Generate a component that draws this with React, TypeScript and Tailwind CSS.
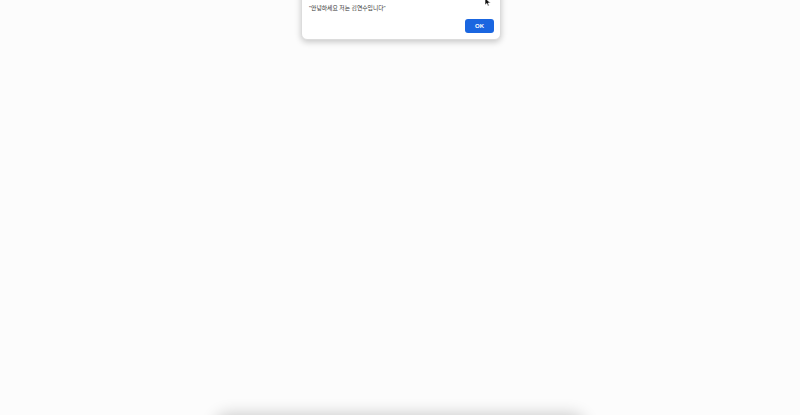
export default function App() {
  return (
    <div className="relative h-[415px] w-[800px] overflow-hidden bg-[#fcfcfc] font-['Liberation_Sans','Noto_Sans_CJK_KR',sans-serif]">
      <div className="absolute left-[301px] top-[-20px] w-[200px] rounded-[6px] bg-white shadow-[0_2px_6px_rgba(0,0,0,0.22)] border border-[#dcdcdc]">
        <div className="px-[7px] pt-[23px] text-[5.8px] leading-[9px] text-[#333]">
          "안녕하세요 저는 김연수입니다"
        </div>
        <div className="flex justify-end pl-[7px] pr-[6px] pb-[6px] pt-[6px]">
          <button className="h-[14px] w-[29px] rounded-[3px] bg-[#1a66e0] text-[6px] font-bold text-white">
            OK
          </button>
        </div>
      </div>
      <svg className="absolute left-[484px] top-[-2px]" width="8" height="10" viewBox="0 0 8 10">
        <path d="M1 0 L1 7 L2.8 5.4 L4 8 L5.2 7.5 L4 5 L6.5 5 Z" fill="#111" stroke="#fff" strokeWidth="0.6" />
      </svg>
      <div className="absolute left-[215px] top-[418px] h-[40px] w-[370px] rounded-[14px] bg-white shadow-[0_-4px_16px_rgba(0,0,0,0.2)]" />
    </div>
  );
}
